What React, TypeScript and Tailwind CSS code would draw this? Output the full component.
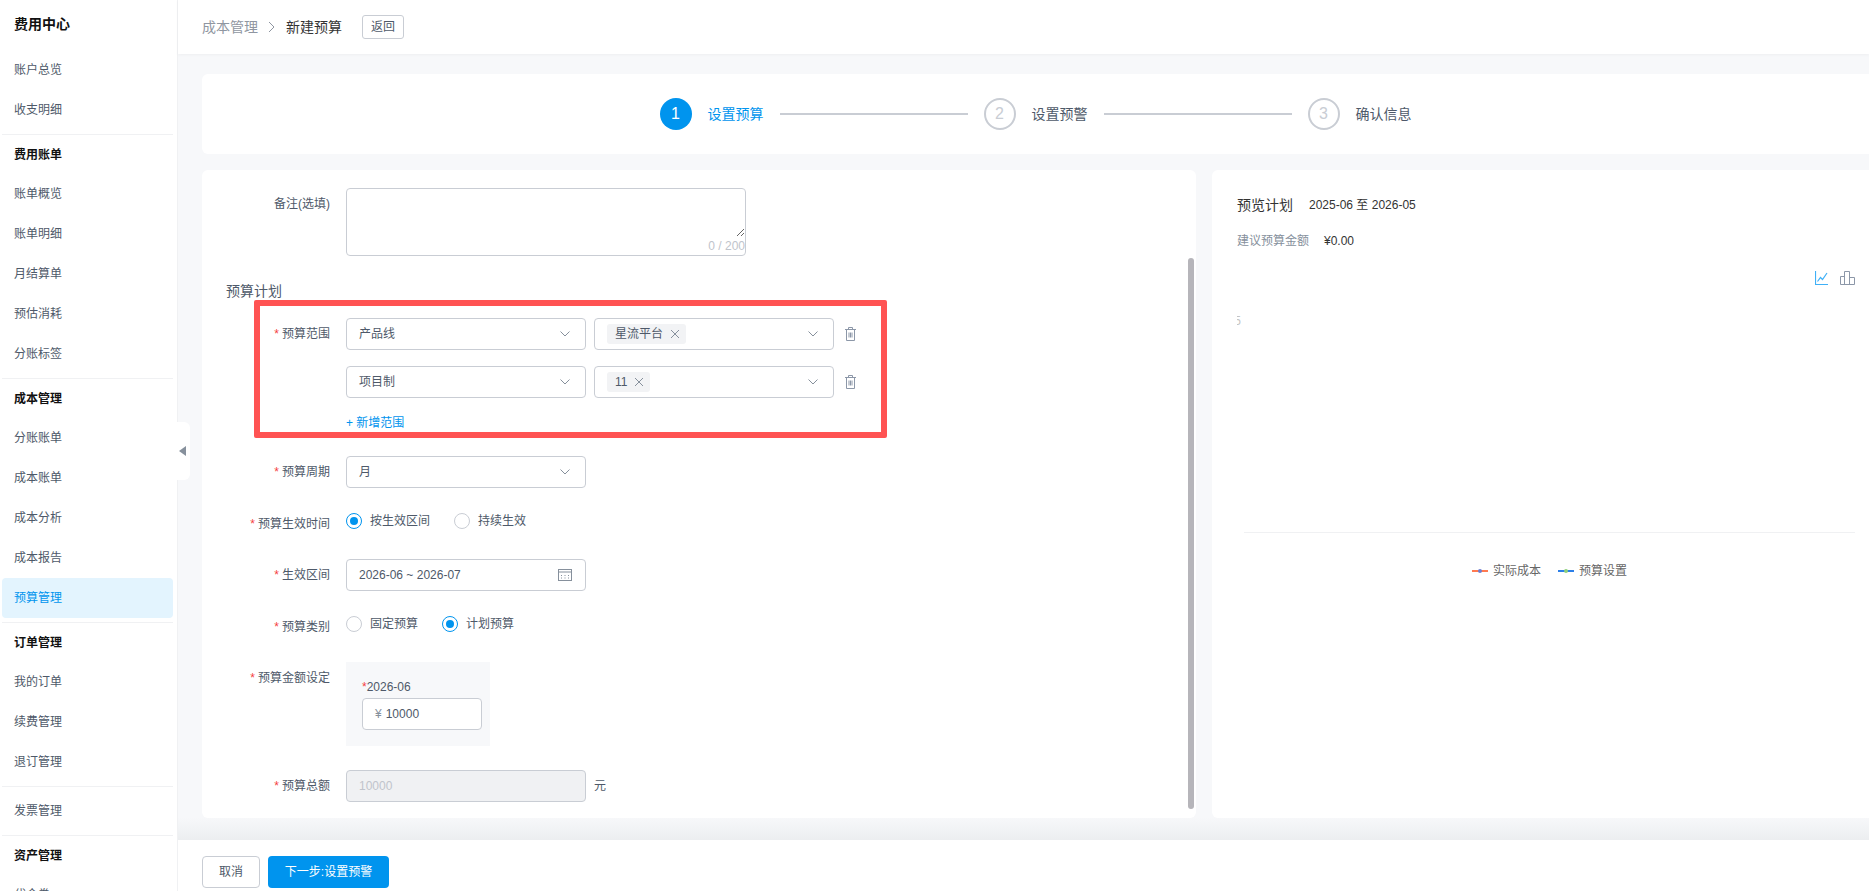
type NavGroup = { title?: string; items: string[] };

const navGroups: NavGroup[] = [
  { items: ['账户总览', '收支明细'] },
  { title: '费用账单', items: ['账单概览', '账单明细', '月结算单', '预估消耗', '分账标签'] },
  { title: '成本管理', items: ['分账账单', '成本账单', '成本分析', '成本报告', '预算管理'] },
  { title: '订单管理', items: ['我的订单', '续费管理', '退订管理'] },
  { items: ['发票管理'] },
  { title: '资产管理', items: ['代金券'] },
];

function Sidebar() {
  return (
    <aside className="w-[178px] shrink-0 border-r border-[#f0f1f3] bg-white overflow-hidden">
      <div className="h-[50px] pl-[14px] pt-[14px] text-[14px] leading-[20px] font-bold text-[#111]">费用中心</div>
      {navGroups.map((group, i) => (
        <div
          key={i}
          className={`mx-[2px] w-[171px] border-[#f0f1f3] pb-[4px] ${i < navGroups.length - 1 ? 'border-b' : ''} ${i === 4 ? 'pt-[4px]' : ''}`}
        >
          {group.title && (
            <div className="h-[39px] pl-[12px] flex items-center text-[12px] font-bold text-[#111]">{group.title}</div>
          )}
          {group.items.map(item => (
            <div
              key={item}
              className={`h-[40px] pl-[12px] flex items-center text-[12px] rounded-[4px] ${item === '预算管理' ? 'bg-[#e3f4fe] text-[#0094ee]' : 'text-[#4e5969]'}`}
            >
              {item}
            </div>
          ))}
        </div>
      ))}
    </aside>
  );
}

function Chevron() {
  return (
    <svg width="10" height="6" viewBox="0 0 10 6" fill="none" stroke="#86909c" strokeWidth="1">
      <path d="M0.5 0.5 5 5 9.5 0.5" />
    </svg>
  );
}

function Trash() {
  return (
    <svg width="11" height="14" viewBox="0 0 11 14" fill="none" stroke="#8c97a8" strokeWidth="1">
      <path d="M0 2.5h11M3.5 2.5V.5h4v2M1.5 2.5v11h8v-11M4 5.5v5M5.5 5.5v5M7 5.5v5" />
    </svg>
  );
}

function Label({ text, required = true }: { text: string; required?: boolean }) {
  return (
    <div className="w-[128px] h-[32px] mr-[16px] shrink-0 flex items-center justify-end text-[12px] text-[#4e5969]">
      {required && <span className="text-[#f53f3f] mr-[3px]">*</span>}
      {text}
    </div>
  );
}

function Select({ value, children }: { value?: string; children?: React.ReactNode }) {
  return (
    <div className="w-[240px] h-[32px] border border-[#c9cdd4] rounded-[4px] bg-white pl-[12px] pr-[15px] flex items-center justify-between text-[12px] text-[#4e5969]">
      {value ?? children}
      <Chevron />
    </div>
  );
}

function Tag({ text }: { text: string }) {
  return (
    <span className="h-[20px] pl-[8px] pr-[6px] flex items-center gap-[7px] rounded-[3px] bg-[#f2f3f5] text-[12px] text-[#4e5969]">
      {text}
      <svg width="10" height="10" viewBox="0 0 10 10" fill="none" stroke="#86909c" strokeWidth="1">
        <path d="M1 1l8 8M9 1l-8 8" />
      </svg>
    </span>
  );
}

function Radio({ text, checked }: { text: string; checked?: boolean }) {
  return (
    <div className="flex items-center gap-[8px] text-[12px] text-[#4e5969]">
      <span
        className={`w-[16px] h-[16px] rounded-full border flex items-center justify-center ${checked ? 'border-[#0094ee]' : 'border-[#c9cdd4]'}`}
      >
        {checked && <span className="w-[8px] h-[8px] rounded-full bg-[#0094ee]" />}
      </span>
      {text}
    </div>
  );
}

function Step({ n, text, active }: { n: number; text: string; active?: boolean }) {
  return (
    <div className="flex items-center gap-[16px]">
      <span
        className={`w-[32px] h-[32px] rounded-full flex items-center justify-center text-[16px] ${active ? 'bg-[#0094ee] text-white' : 'border-2 border-[#c9cdd4] text-[#c9cdd4]'}`}
      >
        {n}
      </span>
      <span className={`pt-[1px] text-[14px] ${active ? 'text-[#0094ee]' : 'text-[#4e5969]'}`}>{text}</span>
    </div>
  );
}

function FormPanel() {
  return (
    <div className="relative w-[994px] shrink-0 h-[648px] bg-white rounded-[6px] pt-[18px] overflow-hidden">
      <div className="flex">
        <Label text="备注(选填)" required={false} />
        <div className="w-[400px] h-[68px] border border-[#c9cdd4] rounded-[4px] bg-white">
          <textarea className="block w-full h-[48px] resize outline-none" />
          <div className="text-right text-[12px] leading-[18px] text-[#c0c4cc]">0 / 200</div>
        </div>
      </div>

      <div className="mt-[25px] pl-[24px] text-[14px] leading-[20px] text-[#4e5969]">预算计划</div>

      <div className="mt-[17px] flex">
        <Label text="预算范围" />
        <div>
          <div className="flex items-center gap-[8px]">
            <Select value="产品线" />
            <Select>
              <Tag text="星流平台" />
            </Select>
            <span className="ml-[3px] flex"><Trash /></span>
          </div>
          <div className="mt-[16px] flex items-center gap-[8px]">
            <Select value="项目制" />
            <Select>
              <Tag text="11" />
            </Select>
            <span className="ml-[3px] flex"><Trash /></span>
          </div>
          <div className="mt-[15px] text-[12px] leading-[20px] text-[#0094ee]">+ 新增范围</div>
        </div>
      </div>

      <div className="mt-[23px] flex">
        <Label text="预算周期" />
        <Select value="月" />
      </div>

      <div className="mt-[20px] flex">
        <Label text="预算生效时间" />
        <div className="h-[26px] flex items-center gap-[24px]">
          <Radio text="按生效区间" checked />
          <Radio text="持续生效" />
        </div>
      </div>

      <div className="mt-[19px] flex">
        <Label text="生效区间" />
        <div className="w-[240px] h-[32px] border border-[#c9cdd4] rounded-[4px] pl-[12px] pr-[13px] flex items-center justify-between text-[12px] text-[#4e5969]">
          2026-06 ~ 2026-07
          <svg width="14" height="12" viewBox="0 0 14 12" fill="none" stroke="#86909c" strokeWidth="1">
            <rect x="0.5" y="0.5" width="13" height="11" />
            <path d="M0.5 3h13" />
            <path d="M3 6.5h1M6.5 6.5h1M10 6.5h1M3 9h1M6.5 9h1M10 9h1" />
          </svg>
        </div>
      </div>

      <div className="mt-[20px] flex">
        <Label text="预算类别" />
        <div className="h-[26px] flex items-center gap-[24px]">
          <Radio text="固定预算" />
          <Radio text="计划预算" checked />
        </div>
      </div>

      <div className="mt-[19px] flex">
        <Label text="预算金额设定" />
        <div className="w-[144px] h-[84px] bg-[#f7f8fa] pl-[16px] pt-[17px]">
          <div className="text-[12px] leading-[16px] text-[#4e5969]">
            <span className="text-[#f53f3f]">*</span>2026-06
          </div>
          <div className="mt-[3px] w-[120px] h-[32px] border border-[#c9cdd4] rounded-[4px] bg-white pl-[12px] flex items-center gap-[4px] text-[12px] text-[#4e5969]">
            <span className="text-[#86909c]">¥</span>10000
          </div>
        </div>
      </div>

      <div className="mt-[24px] flex items-center">
        <Label text="预算总额" />
        <div className="w-[240px] h-[32px] border border-[#c9cdd4] rounded-[4px] bg-[#f0f1f3] pl-[12px] flex items-center text-[12px] text-[#c0c4cc]">
          10000
        </div>
        <span className="ml-[8px] text-[12px] text-[#4e5969]">元</span>
      </div>

      {/* annotation box */}
      <div className="absolute left-[52px] top-[130px] w-[633px] h-[138px] border-[6px] border-[#ff5353] rounded-[2px] pointer-events-none" />
      {/* scrollbar */}
      <div className="absolute left-[986px] top-[88px] w-[6px] h-[551px] rounded-[3px] bg-[#b6b5ba]" />
    </div>
  );
}

function PreviewPanel() {
  return (
    <div className="flex-1 h-[648px] bg-white rounded-tl-[6px] rounded-bl-[6px] pl-[25px] pr-[14px] pt-[25px] overflow-hidden">
      <div className="flex items-center text-[12px] leading-[20px] text-[#333]">
        <span className="text-[14px]">预览计划</span>
        <span className="ml-[16px]">2025-06 至 2026-05</span>
      </div>
      <div className="mt-[16px] flex items-center text-[12px] leading-[20px]">
        <span className="text-[#86909c]">建议预算金额</span>
        <span className="ml-[15px] text-[#333]">¥0.00</span>
      </div>
      <div className="mt-[20px] h-[15px] flex justify-end items-start gap-[12px]">
        <svg width="13" height="14" viewBox="0 0 13 14" fill="none" stroke="#3fb0f7" strokeWidth="1.2">
          <path d="M.5 0v13.5H13M2.5 10.5l3-4 2 2L12 2" />
        </svg>
        <svg width="15" height="14" viewBox="0 0 15 14" fill="none" stroke="#8c97a8" strokeWidth="1">
          <path d="M.5 13.5h14M.5 13.5v-8h4v8M4.5 13.5V.5h5v13M9.5 13.5v-7h5v7" />
        </svg>
      </div>
      <div className="mt-[29px] w-[4px] h-[12px] flex justify-end overflow-hidden text-[12px] leading-[12px] text-[#c4c4c4]">5</div>
      <div className="mt-[205px] ml-[7px] h-px bg-[#f0f1f3]" />
      <div className="mt-[30px] ml-[7px] flex justify-center items-center text-[12px] leading-[16px] text-[#666]">
        <svg width="16" height="6" viewBox="0 0 16 6" className="mr-[5px]">
          <path d="M0 3h16" stroke="#ff7a50" strokeWidth="2" />
          <circle cx="8" cy="3" r="2" fill="#6f7fd0" />
        </svg>
        <span>实际成本</span>
        <svg width="16" height="6" viewBox="0 0 16 6" className="ml-[17px] mr-[5px]">
          <path d="M0 3h16" stroke="#2c7fe8" strokeWidth="2" />
          <circle cx="8" cy="3" r="2" fill="#8fd07a" />
        </svg>
        <span>预算设置</span>
      </div>
    </div>
  );
}

export default function App() {
  return (
    <div className="relative flex h-[891px] w-[1869px] overflow-hidden bg-white [font-family:'Liberation_Sans','Noto_Sans_CJK_SC',sans-serif]">
      <Sidebar />
      <main className="relative flex-1 min-w-0 flex flex-col bg-[#f7f8fa]">
        {/* Header */}
        <header className="h-[54px] shrink-0 bg-white pl-[24px] flex items-center shadow-[0_1px_3px_rgba(0,0,0,0.04)] text-[14px]">
          <span className="text-[#8f96a1]">成本管理</span>
          <svg width="8" height="12" viewBox="0 0 8 12" fill="none" stroke="#8f96a1" strokeWidth="1" className="ml-[10px] mr-[10px]">
            <path d="M1 1l5 5-5 5" />
          </svg>
          <span className="text-[#333]">新建预算</span>
          <button className="ml-[20px] w-[42px] h-[24px] border border-[#c9cdd4] rounded-[3px] text-[12px] text-[#4e5969]">返回</button>
        </header>

        {/* Content */}
        <div className="flex-1 pt-[20px] pl-[24px]">
          <div className="h-[80px] bg-white rounded-tl-[6px] rounded-bl-[6px] flex items-center justify-center gap-[16px]">
            <Step n={1} text="设置预算" active />
            <span className="w-[188px] h-[2px] bg-[#c9cdd4]" />
            <Step n={2} text="设置预警" />
            <span className="w-[188px] h-[2px] bg-[#c9cdd4]" />
            <Step n={3} text="确认信息" />
          </div>
          <div className="mt-[16px] flex gap-[16px]">
            <FormPanel />
            <PreviewPanel />
          </div>
        </div>

        {/* Footer */}
        <div className="h-[22px] shrink-0 bg-gradient-to-b from-[#f7f8fa] to-[#eceef0]" />
        <footer className="h-[51px] shrink-0 bg-white pl-[24px] pt-[16px] flex items-start gap-[8px] text-[12px]">
          <button className="w-[58px] h-[32px] border border-[#c9cdd4] rounded-[4px] bg-white text-[#4e5969]">取消</button>
          <button className="w-[121px] h-[32px] rounded-[4px] bg-[#0094ee] text-white">下一步:设置预警</button>
        </footer>

        {/* Collapse handle */}
        <div className="absolute -left-[1px] top-[422px] w-[13px] h-[58px] bg-white rounded-r-[6px] flex items-center pl-[2px]">
          <span className="w-0 h-0 border-y-[5px] border-y-transparent border-r-[7px] border-r-[#86909c]" />
        </div>
      </main>
    </div>
  );
}
